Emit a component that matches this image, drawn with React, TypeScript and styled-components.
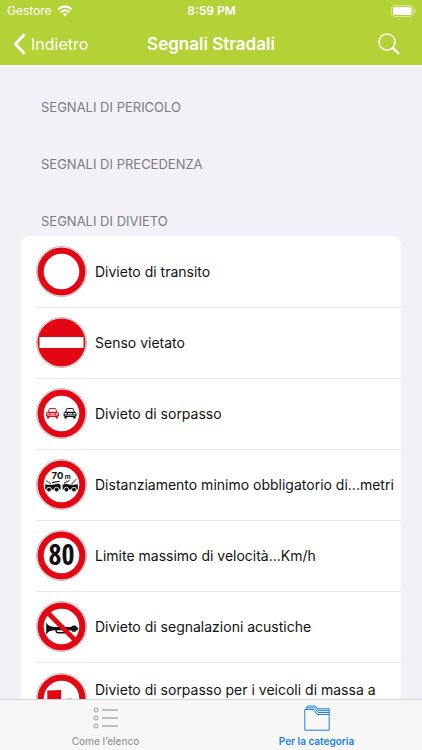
import React from "react";
import styled, { createGlobalStyle } from "styled-components";

const GlobalStyle = createGlobalStyle`
  *, *::before, *::after { box-sizing: border-box; }
  body {
    margin: 0;
    background: #f2f1f7;
    font-family: Inter, "Noto Sans", sans-serif;
    color: #111;
  }
  button { font: inherit; }
`;

const Screen = styled.div`
  display: flex;
  flex-direction: column;
  height: 100vh;
  overflow: hidden;
`;

const Header = styled.header`
  flex: none;
  background: #b2d235;
  color: #fff;
`;

const StatusBar = styled.div`
  display: grid;
  grid-template-columns: 1fr auto 1fr;
  align-items: center;
  height: 22px;
  padding: 0 6px 0 7px;
  font-size: 12px;
  line-height: 16px;
`;

const Carrier = styled.span`
  display: flex;
  align-items: center;
  gap: 5px;
`;

const Clock = styled.span`
  font-weight: 600;
`;

const Battery = styled.span`
  display: flex;
  justify-content: flex-end;
`;

const NavBar = styled.nav`
  display: grid;
  grid-template-columns: 1fr auto 1fr;
  align-items: center;
  height: 43px;
  padding: 0 13px;
`;

const BackButton = styled.button`
  display: flex;
  align-items: center;
  justify-self: start;
  gap: 5px;
  padding: 0;
  border: 0;
  background: none;
  color: inherit;
  font-size: 16px;
  line-height: 22px;
`;

const Title = styled.h1`
  margin: 0;
  font-size: 17px;
  font-weight: 600;
  line-height: 22px;
`;

const SearchButton = styled.button`
  display: flex;
  justify-self: end;
  padding: 0 8px;
  border: 0;
  background: none;
  color: inherit;
`;

const Content = styled.main`
  flex: 1;
  min-height: 0;
  overflow-y: auto;
  scrollbar-width: none;
  padding: 14px 21px 0;
`;

const SectionTitle = styled.h2`
  margin: 0;
  padding: 19px 20px 20px;
  color: #7c7b80;
  font-size: 13px;
  font-weight: 400;
  line-height: 18px;
  text-transform: uppercase;
`;

const Card = styled.ul`
  list-style: none;
  margin: -14px 0 0;
  padding: 0;
  border-radius: 9px;
  background: #fff;
`;

const RowBody = styled.div`
  display: flex;
  align-items: center;
  gap: 8px;
  padding: 10px 3px 10px 0;
`;

const Row = styled.li`
  padding-left: 15px;

  & + & > ${RowBody} {
    padding-top: 9px;
    border-top: 1px solid #e9e9eb;
  }

  &:last-child > ${RowBody} {
    padding-top: 10px;
  }
`;

const RowLabel = styled.span`
  min-width: 0;
  font-size: 14px;
  line-height: 18px;
`;

const TabBar = styled.nav`
  flex: none;
  display: grid;
  grid-template-columns: 1fr 1fr;
  height: 51px;
  border-top: 1px solid #d3d3d5;
  background: #f7f7f7;
`;

const Tab = styled.button<{ $active?: boolean }>`
  display: flex;
  flex-direction: column;
  align-items: center;
  gap: 2px;
  padding: 5px 0 0;
  border: 0;
  background: none;
  color: ${(p) => (p.$active ? "#1d7ff0" : "#98989a")};
  font-size: 10px;
  font-weight: ${(p) => (p.$active ? 600 : 500)};
  line-height: 16px;

  svg { display: block; }
`;

const SignSvg = styled.svg`
  flex: none;
  display: block;
  width: 51px;
  height: 51px;
`;

const RED = "#e30613";

function Sign({ solid, children }: { solid?: boolean; children?: React.ReactNode }) {
  return (
    <SignSvg viewBox="0 0 51 51" aria-hidden="true">
      <circle cx="25.5" cy="25.5" r="25" fill="#fff" stroke="#a9a3a3" strokeWidth="0.8" />
      <circle cx="25.5" cy="25.5" r="24" fill={RED} />
      {!solid && <circle cx="25.5" cy="25.5" r="17.8" fill="#fff" />}
      {children}
    </SignSvg>
  );
}

function Car({ x, color }: { x: number; color: string }) {
  return (
    <g transform={`translate(${x} 20)`} fill={color}>
      <path d="M3.2 0.3 Q6.5 -0.5 9.8 0.3 L11.4 3.9 Q12.9 4.3 12.9 5.5 V8.2 H12 V10.4 H9.7 V8.9 H3.3 V10.4 H1 V8.2 H0.1 V5.5 Q0.1 4.3 1.6 3.9 Z" />
      <path d="M3.8 1.1 H9.2 L10.4 3.8 H2.6 Z" fill="#fff" />
      <path d="M1.1 5 H3.2 V6.6 H1.1 Z M9.8 5 H11.9 V6.6 H9.8 Z M4.2 5.1 H8.8 V5.8 H4.2 Z M4.2 6.4 H8.8 V7 H4.2 Z M1.5 7.5 H11.5 V8.1 H1.5 Z" fill="#fff" />
    </g>
  );
}

const signs = {
  transit: <Sign />,
  noEntry: (
    <Sign solid>
      <rect x="3.5" y="20" width="44" height="11" fill="#fff" />
    </Sign>
  ),
  overtaking: (
    <Sign>
      <Car x={10} color={RED} />
      <Car x={27.5} color="#111" />
    </Sign>
  ),
  distance: (
    <Sign>
      <text x="15.6" y="19.5" fontSize="9.5" fontWeight="700" fontFamily="Inter, sans-serif" fill="#111">70</text>
      <text x="28.8" y="19.5" fontSize="6.5" fontWeight="700" fontFamily="Inter, sans-serif" fill="#111">m</text>
      <path d="M9.2 25.4 L15.6 26 L22.4 24.4 L24.6 26 V30.4 H9.2 Z" fill="#111" />
      <path d="M9.8 21.4 L15.4 25.2" stroke="#111" strokeWidth="0.8" />
      <path d="M16 23.6 L23.6 22.2" stroke="#111" strokeWidth="1.1" />
      <circle cx="13" cy="30.6" r="2.4" fill="#111" stroke="#fff" strokeWidth="0.8" />
      <circle cx="20.6" cy="30.6" r="2.4" fill="#111" stroke="#fff" strokeWidth="0.8" />
      <path d="M26.6 26 L28.8 24.8 L35.6 26 L41.8 25.2 V30.4 H26.6 Z" fill="#111" />
      <path d="M28 24.2 L33.4 21.4" stroke="#111" strokeWidth="1" />
      <path d="M35.2 25.4 L40.2 20.2" stroke="#111" strokeWidth="1" />
      <circle cx="30.4" cy="30.6" r="2.4" fill="#111" stroke="#fff" strokeWidth="0.8" />
      <circle cx="38" cy="30.6" r="2.4" fill="#111" stroke="#fff" strokeWidth="0.8" />
    </Sign>
  ),
  speed: (
    <Sign>
      <text x="25.5" y="35" textAnchor="middle" fontSize="28" fontWeight="700" fontFamily="'Open Sans Condensed', 'DejaVu Sans Condensed', sans-serif" fill="#111">80</text>
    </Sign>
  ),
  horn: (
    <Sign>
      <path d="M10.2 21.3 Q12 25.6 18 26 H36 V29.2 H18 Q12 29.6 10.2 33.8 Z" fill="#111" />
      <path d="M22 26.6 H29 Q31 26.6 31 29 Q31 31.7 29 31.7 H22 Q20 31.7 20 29 Q20 26.6 22 26.6 Z" fill="none" stroke="#111" strokeWidth="1.4" />
      <circle cx="38" cy="27.7" r="3.1" fill="#111" />
      <path d="M41 26.6 H42.2 V28.8 H41 Z" fill="#111" />
      <path d="M12 12 L39 39" stroke={RED} strokeWidth="4.6" />
    </Sign>
  ),
  truck: (
    <Sign>
      <path d="M11.3 17.4 L25.2 17 V31 H11.3 Z" fill={RED} />
      <path d="M28.5 32 V28 Q28.5 26.2 31 25.7 H35.5 Q37.6 26 38 28.5 V32 Z" fill="#111" />
      <path d="M30.4 28.8 L31.4 26.9 H35.2 L36.4 28.8 Z" fill="#fff" />
    </Sign>
  ),
};

const prohibitions: { sign: keyof typeof signs; label: string }[] = [
  { sign: "transit", label: "Divieto di transito" },
  { sign: "noEntry", label: "Senso vietato" },
  { sign: "overtaking", label: "Divieto di sorpasso" },
  { sign: "distance", label: "Distanziamento minimo obbligatorio di...metri" },
  { sign: "speed", label: "Limite massimo di velocità...Km/h" },
  { sign: "horn", label: "Divieto di segnalazioni acustiche" },
  { sign: "truck", label: "Divieto di sorpasso per i veicoli di massa a pieno carico superiore a 3,5 t" },
];

const WifiIcon = () => (
  <svg width="16" height="12" viewBox="0 0 16 12" fill="none" stroke="#fff" strokeWidth="2" aria-hidden="true">
    <path d="M1.2 4.4 Q8 -1.6 14.8 4.4" />
    <path d="M3.7 7.2 Q8 3.4 12.3 7.2" />
    <path d="M8 11.4 L5.7 9.1 Q8 7.3 10.3 9.1 Z" fill="#fff" stroke="none" />
  </svg>
);

const BatteryIcon = () => (
  <svg width="25" height="12" viewBox="0 0 25 12" aria-hidden="true">
    <rect x="0.5" y="0.5" width="21.5" height="11" rx="3" fill="none" stroke="#fff" strokeOpacity="0.5" />
    <rect x="2" y="2" width="18.5" height="8" rx="1.6" fill="#fff" />
    <path d="M23.3 4 Q24.7 4.6 24.7 6 T23.3 8 Z" fill="#fff" fillOpacity="0.6" />
  </svg>
);

const ChevronIcon = () => (
  <svg width="13" height="22" viewBox="0 0 13 22" fill="none" stroke="#fff" strokeWidth="3" aria-hidden="true">
    <path d="M11.6 1.2 L2.4 11 L11.6 20.8" />
  </svg>
);

const SearchIcon = () => (
  <svg width="24" height="24" viewBox="0 0 24 24" fill="none" stroke="#fff" aria-hidden="true">
    <circle cx="10" cy="10" r="8" strokeWidth="1.5" />
    <path d="M15.8 15.8 L22 22" strokeWidth="2.4" />
  </svg>
);

const ListIcon = () => (
  <svg width="26" height="26" viewBox="0 0 26 26" fill="none" stroke="currentColor" aria-hidden="true">
    {[5, 13, 21].map((y) => (
      <g key={y}>
        <circle cx="3" cy={y} r="2" strokeWidth="1" />
        <path d={`M9 ${y} H25`} strokeWidth="1.2" />
      </g>
    ))}
  </svg>
);

const FolderIcon = () => (
  <svg width="26" height="26" viewBox="0 0 26 26" fill="none" stroke="currentColor" strokeWidth="1" strokeLinejoin="round" aria-hidden="true">
    <path d="M0.8 4.5 H9.5 L13 9.5 H25.2 V25.2 H0.8 Z" />
    <path d="M1.6 4.5 L2.6 2.8 H10.6 L14 7.5 H25.2 V9.5" />
    <path d="M2.8 2.8 L3.8 1 H11.6 L14.6 5.6 H25.2 V7.5" />
    <path d="M13.6 3.8 H25.2 V5.6" />
  </svg>
);

export default function App() {
  return (
    <>
      <GlobalStyle />
      <Screen>
        <Header>
          <StatusBar>
            <Carrier>Gestore <WifiIcon /></Carrier>
            <Clock>8:59 PM</Clock>
            <Battery><BatteryIcon /></Battery>
          </StatusBar>
          <NavBar>
            <BackButton type="button"><ChevronIcon />Indietro</BackButton>
            <Title>Segnali Stradali</Title>
            <SearchButton type="button" aria-label="Cerca"><SearchIcon /></SearchButton>
          </NavBar>
        </Header>
        <Content>
          <SectionTitle>Segnali di pericolo</SectionTitle>
          <SectionTitle>Segnali di precedenza</SectionTitle>
          <SectionTitle>Segnali di divieto</SectionTitle>
          <Card>
            {prohibitions.map(({ sign, label }) => (
              <Row key={sign}>
                <RowBody>
                  {signs[sign]}
                  <RowLabel>{label}</RowLabel>
                </RowBody>
              </Row>
            ))}
          </Card>
        </Content>
        <TabBar>
          <Tab type="button"><ListIcon />Come l’elenco</Tab>
          <Tab type="button" $active aria-current="page"><FolderIcon />Per la categoria</Tab>
        </TabBar>
      </Screen>
    </>
  );
}
